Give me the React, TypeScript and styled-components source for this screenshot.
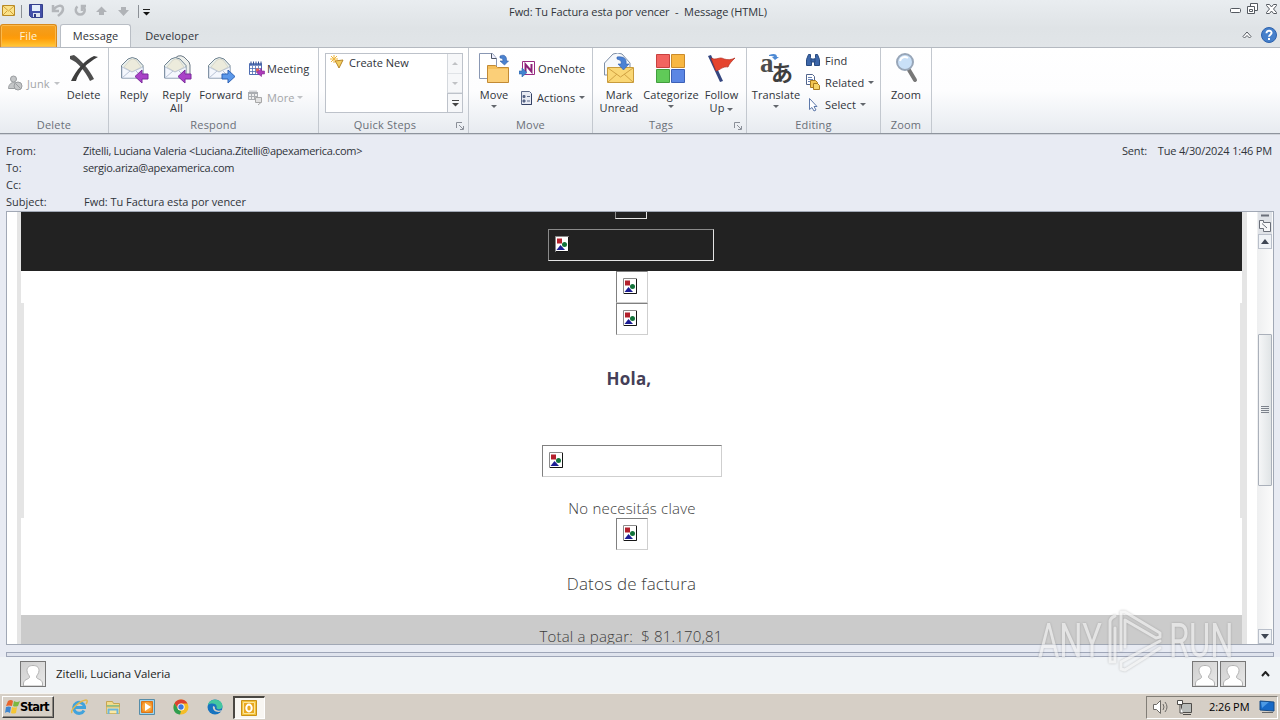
import type { ReactNode } from "react";
import styled, { createGlobalStyle } from "styled-components";

const GlobalStyle = createGlobalStyle`
  * {
    box-sizing: border-box;
  }
  body {
    margin: 0;
    overflow: hidden;
    font-family: "Open Sans", "Noto Sans", sans-serif;
    font-size: 11px;
    color: #30343a;
  }
  svg {
    display: block;
    flex: none;
  }
`;

const Window = styled.div`
  position: relative;
  width: 1280px;
  height: 720px;
  display: flex;
  flex-direction: column;
  background-color: #e8ebf3;
  overflow: hidden;
`;
const Top = styled.div`
  height: 47px;
  background: linear-gradient(#e9edf0, #dfe3e6 60%, #e1e5e8);
`;
const TitleBar = styled.div`
  height: 24px;
  padding-bottom: 2px;
  display: grid;
  grid-template-columns: 400px 1fr 400px;
  align-items: center;
`;
const QuickAccess = styled.div`
  display: flex;
  align-items: center;
  height: 22px;
`;
const Title = styled.div`
  text-align: center;
  padding-right: 4px;
  letter-spacing: -0.08px;
`;
const WindowButtons = styled.div`
  display: flex;
  justify-content: flex-end;
  padding: 0 1px 7px 0;
`;
const TabRow = styled.div`
  height: 23px;
  display: flex;
  align-items: flex-end;
`;
const Tab = styled.div<{ $kind?: "file" | "active"; $width: number }>`
  width: ${(p) => p.$width}px;
  height: 23px;
  line-height: 24px;
  text-align: center;
  letter-spacing: 0.1px;
  border-radius: 3px 3px 0 0;
  ${(p) =>
    p.$kind === "file" &&
    `color: #fff3d6;
    line-height: 21px;
    border: 1px solid #d88a1c;
    border-bottom: 0;
    background: linear-gradient(#f3a021, #f89a10 45%, #ff9c08 60%, #ffcb3c);
    box-shadow: inset 0 0 0 1px #fbb94c;`}
  ${(p) =>
    p.$kind === "active" &&
    `margin: 0 0 -1px 3px;
    height: 24px;
    line-height: 22px;
    border: 1px solid #b9bec5;
    border-bottom: 0;
    background-color: #fff;`}
`;
const TabTools = styled.div`
  margin-left: auto;
  display: flex;
  align-items: center;
  gap: 9px;
  height: 23px;
  padding: 0 3px 2px 0;
`;
const Ribbon = styled.div`
  height: 87px;
  display: flex;
  border-top: 1px solid #b4b9c0;
  border-bottom: 1px solid #8e949d;
  background: linear-gradient(#fff, #fdfdfe 50%, #e7ebf0);
`;
const GroupBox = styled.div<{ $width: number }>`
  position: relative;
  width: ${(p) => p.$width}px;
  height: 85px;
  display: flex;
  flex-direction: column;
  border-right: 1px solid #c3c8cf;
`;
const GroupBody = styled.div`
  flex: 1;
  display: flex;
`;
const GroupLabel = styled.div<{ $launcher?: boolean }>`
  height: 16px;
  padding-right: ${(p) => (p.$launcher ? 17 : 0)}px;
  line-height: 16px;
  text-align: center;
  letter-spacing: 0.2px;
  color: #6a6f78;
`;
const Launcher = styled.svg`
  position: absolute;
  right: 4px;
  bottom: 3px;
`;
const BigButton = styled.div<{ $width: number }>`
  width: ${(p) => p.$width}px;
  padding-top: 5px;
  display: flex;
  flex-direction: column;
  align-items: center;
  text-align: center;
  line-height: 13px;
  white-space: nowrap;
  letter-spacing: 0.1px;
`;
const BigLabel = styled.div`
  padding-top: 3px;
  white-space: pre;
`;
const SmallColumn = styled.div<{ $left?: number; $top: number; $row: number }>`
  padding: ${(p) => p.$top}px 0 0 ${(p) => p.$left ?? 0}px;
  display: grid;
  grid-auto-rows: ${(p) => p.$row}px;
  align-content: start;
`;
const SmallButton = styled.div<{ $muted?: boolean; $gap?: number }>`
  display: flex;
  align-items: center;
  gap: ${(p) => p.$gap ?? 3}px;
  white-space: nowrap;
  letter-spacing: 0.1px;
  color: ${(p) => (p.$muted ? "#a3a5a8" : "inherit")};
`;
const Arrow = styled.i<{ $muted?: boolean; $up?: boolean; $below?: boolean }>`
  display: inline-block;
  width: 0;
  height: 0;
  margin-top: ${(p) => (p.$below ? 4 : 0)}px;
  border: 3px solid transparent;
  border-top-color: ${(p) => (p.$muted ? "#c0c2c5" : "#62666c")};
  border-bottom: 0;
  vertical-align: middle;
  transform: ${(p) => (p.$up ? "rotate(180deg)" : "none")};
`;
const Steps = styled.div`
  width: 138px;
  height: 60px;
  margin: 5px 0 0 6px;
  display: flex;
  border: 1px solid #bdc2ca;
  background-color: #fff;
`;
const StepItem = styled.div`
  flex: 1;
  height: 18px;
  display: flex;
  align-items: center;
  gap: 5px;
  padding: 0 0 1px 4px;
`;
const StepScroll = styled.div`
  width: 15px;
  display: grid;
  grid-template-rows: 20px 19px 1fr;
  border-left: 1px solid #d4d8dd;
  background-color: #f6f7f9;
  div {
    display: flex;
    align-items: center;
    justify-content: center;
    border-bottom: 1px solid #e0e3e7;
  }
  div:last-child {
    border: 1px solid #bdc2ca;
    margin: 0 -1px -1px;
  }
`;
const Headers = styled.div`
  height: 77px;
  padding: 7px 8px 0 6px;
  display: flex;
  justify-content: space-between;
  border-top: 1px solid #d0d4db;
`;
const HeaderGrid = styled.div`
  display: grid;
  grid-template-columns: 77px auto;
  grid-auto-rows: 17px;
  line-height: 17px;
`;
const Address = styled.span`
  letter-spacing: -0.3px;
`;
const Subject = styled.span`
  padding-left: 1px;
  letter-spacing: -0.03px;
`;
const Sent = styled.div`
  display: flex;
  gap: 11px;
  line-height: 17px;
  letter-spacing: -0.18px;
`;
const Frame = styled.div`
  height: 434px;
  width: 1268px;
  margin-left: 6px;
  display: flex;
  border: 1px solid #a1a8b5;
  background-color: #fff;
`;
const Mail = styled.div`
  width: 1230px;
  margin-left: 10px;
  border: solid #e5e5e5;
  border-width: 0 5px 0 4px;
  display: flex;
  flex-direction: column;
  overflow: hidden;
`;
const DarkBand = styled.div`
  height: 59px;
  flex: none;
  padding-right: 2px;
  display: flex;
  flex-direction: column;
  align-items: center;
  background-color: #222;
`;
const MailBlock = styled.div<{ $height: number; $inset?: boolean }>`
  height: ${(p) => p.$height}px;
  flex: none;
  display: flex;
  flex-direction: column;
  align-items: center;
  border: solid #e5e5e5;
  border-width: ${(p) => (p.$inset ? "0 2px 0 3px" : "0")};
`;
const Missing = styled.div<{ $width: number; $top?: number; $onDark?: boolean }>`
  width: ${(p) => p.$width}px;
  height: 32px;
  flex: none;
  margin-top: ${(p) => p.$top ?? 0}px;
  padding: 6px;
  border: 1px solid;
  border-color: ${(p) =>
    p.$onDark ? "#8a8a8a #e4e4e4 #e4e4e4 #8a8a8a" : "#808080 #cfcfcf #cfcfcf #808080"};
`;
const MissingTail = styled.div`
  width: 32px;
  height: 7px;
  flex: none;
  border: solid #e4e4e4;
  border-width: 0 1px 1px;
  border-left-color: #8a8a8a;
`;
const Greeting = styled.div`
  margin: 31px 6px 0 0;
  height: 26px;
  font: 700 17px/26px "Open Sans", sans-serif;
  letter-spacing: 0.2px;
  color: #453f58;
`;
const LightText = styled.div<{ $size: number; $top: number }>`
  margin-top: ${(p) => p.$top}px;
  font-weight: 300;
  font-size: ${(p) => p.$size}px;
  line-height: 20px;
  letter-spacing: 0.2px;
  white-space: pre;
  color: #3c3c3c;
`;
const Total = styled.div`
  flex: 1;
  display: flex;
  justify-content: center;
  margin-right: -1px;
  padding-right: 2px;
  background-color: #cbcbcb;
`;
const ScrollTrack = styled.div`
  width: 16px;
  margin-left: auto;
  padding: 0 1px;
  display: flex;
  flex-direction: column;
  align-items: center;
  background: linear-gradient(90deg, #eeeff0, #fbfbfb);
`;
const ScrollButton = styled.div`
  width: 14px;
  height: 15px;
  display: flex;
  align-items: center;
  justify-content: center;
  border: 1px solid #b9bfca;
  background-color: #eff2f6;
`;
const Split = styled.div`
  width: 14px;
  height: 22px;
  background-color: #dfe2e7;
`;
const Thumb = styled.div`
  width: 14px;
  height: 152px;
  margin: 85px 0 auto;
  padding-bottom: 2px;
  display: flex;
  flex-direction: column;
  align-items: center;
  justify-content: center;
  gap: 1px;
  border: 1px solid #aab0ba;
  border-radius: 1px;
  background: linear-gradient(90deg, #f5f6f7, #e0e4e6);
  i {
    width: 8px;
    height: 1px;
    background-color: #7d838c;
  }
`;
const Splitter = styled.div`
  height: 5px;
  width: 1268px;
  margin: 7px 0 0 6px;
  border: 1px solid #9fa6b8;
  background-color: #dfe3ed;
`;
const People = styled.div`
  height: 36px;
  padding: 0 10px 3px 20px;
  display: flex;
  align-items: center;
  background-color: #f0f3f6;
`;
const Avatar = styled.div`
  width: 26px;
  height: 26px;
  border: 1px solid #777;
  background: linear-gradient(135deg, #cfcfcf, #e8e8e8);
`;
const PersonName = styled.div`
  margin-left: 10px;
  margin-right: auto;
  font-size: 11.5px;
  letter-spacing: -0.05px;
  color: #222;
`;
const Faces = styled.div`
  display: flex;
  gap: 2px;
  margin-right: 15px;
`;
const Taskbar = styled.div`
  height: 27px;
  padding: 1px 2px 1px;
  display: flex;
  align-items: center;
  border-top: 1px solid #f7f5f1;
  background-color: #d6cfc6;
`;
const Start = styled.div`
  width: 52px;
  height: 22px;
  display: flex;
  align-items: center;
  padding-left: 2px;
  font: 700 11.5px "DejaVu Sans", sans-serif;
  letter-spacing: -0.8px;
  color: #000;
  border: 1px solid;
  border-color: #fff #404040 #404040 #fff;
  box-shadow: inset -1px -1px #8b867e;
`;
const Launchers = styled.div`
  display: flex;
  margin-left: 8px;
`;
const TaskIcon = styled.div<{ $active?: boolean }>`
  width: 34px;
  height: 23px;
  display: flex;
  align-items: center;
  justify-content: center;
  ${(p) =>
    p.$active &&
    `width: 32px;
    margin-left: 1px;
    padding-right: 2px;
    background-color: #f8f6f2;
    border: solid;
    border-width: 2px 1px 1px 2px;
    border-color: #4a4742 #fff #fff #4a4742;`}
`;
const Tray = styled.div`
  width: 132px;
  height: 23px;
  margin-left: auto;
  padding-left: 6px;
  display: flex;
  align-items: center;
  border: 1px solid;
  border-color: #827e77 #fff #fff #827e77;
  color: #000;
`;
const Clock = styled.span`
  width: 41px;
  margin: -2px 9px 0 14px;
  white-space: nowrap;
  letter-spacing: -0.1px;
`;
const Watermark = styled.div`
  position: absolute;
  left: 1038px;
  top: 608px;
  width: 194px;
  height: 66px;
  display: flex;
  align-items: center;
  justify-content: space-between;
  filter: drop-shadow(0 0 1px rgba(90, 90, 90, 0.5));
  opacity: 0.66;
`;
const Mark = styled.span`
  width: 63px;
  font: 400 48px/66px Roboto, sans-serif;
  color: #f2f2f2;
  span {
    display: inline-block;
    transform: scaleX(0.68);
    transform-origin: left;
  }
`;

function Group({
  width,
  label,
  launcher,
  children,
}: {
  width: number;
  label: string;
  launcher?: boolean;
  children: ReactNode;
}) {
  return (
    <GroupBox $width={width}>
      <GroupBody>{children}</GroupBody>
      <GroupLabel $launcher={launcher}>{label}</GroupLabel>
      {launcher && (
        <Launcher width="8" height="8" fill="none" stroke="#8a8f98">
          <path d="M.5 6V.5H6M3 3l4 4M7.500 4v3.500H4" />
        </Launcher>
      )}
    </GroupBox>
  );
}

function Envelope({ kind }: { kind: "reply" | "all" | "forward" }) {
  const fwd = kind === "forward";
  const all = kind === "all";
  return (
    <svg width="32" height="32" viewBox="0 0 32 32">
      {all && (
        <path d="M10 8 17 3q3-1 6 1l5 5 1 3v12h-6" fill="#eef0ec" stroke="#6d7a87" />
      )}
      <path d="M3.500 12.500 10 6q4-3 9 0l6 6.500v12.500H3.500z" fill="#e8eeea" stroke="#6f8291" />
      <path d="m6 14 6-7q3-2 6 0l5 7-9 5z" fill="#ecebdc" stroke="#c9cabd" strokeWidth=".6" />
      <path d="M4 14v11h21V14l-11 5z" fill="#f4f7fd" stroke="#a7b4cb" strokeWidth=".7" />
      <path d="m4 25 8-7m13 7-7-7" stroke="#b8c3d6" fill="none" />
      {fwd ? (
        <path d="M17 21h6v-4l7 6.500-7 6.500v-4h-6z" fill="#5b98ea" stroke="#2f62b5" />
      ) : (
        <path d="M30 21h-6v-4l-7 6.500 7 6.500v-4h6z" fill="#aa42c8" stroke="#7b2a9c" />
      )}
    </svg>
  );
}

function CalendarIcon({ muted }: { muted?: boolean }) {
  const ink = muted ? "#aaadb1" : "#4f6eb2";
  return (
    <svg width="17" height="16" viewBox="0 0 17 16">
      {muted ? (
        <>
          <path d="M.5 2.500h9v7h-9z" fill="#eee" stroke={ink} />
          <path d="M0 3h10" stroke={ink} strokeWidth="2" />
          <path d="M2 .5v2m2-2v2m2-2v2m2-2v2M1 6.500h8M3.500 4v5M6.500 4v5" stroke={ink} />
          <path d="M7.500 7.500h6v5h-6zM10 15l3-2.500" fill="#e2e2e2" stroke="#a8a8a8" />
        </>
      ) : (
        <>
          <path d="M1.500 3.500h12v10h-12z" fill="#fff" stroke={ink} />
          <path d="M1 3.500h13" stroke={ink} strokeWidth="2.500" />
          <path d="M3 .5v3m2.500-3v3M8 .5v3m2.500-3v3M13 .5v3" stroke="#334f91" />
          <path d="M2 7.500h11M2 10.500h11M4.500 5v8M7.500 5v8M10.500 5v8" stroke={ink} strokeWidth=".8" />
          <path d="M8 7.500h3v3H8z" fill="#e26157" />
          <path d="M16.500 10h-3V7.500L8.500 11.500l5 4V13h3z" fill="#ad3ab8" stroke="#872895" strokeWidth=".6" />
        </>
      )}
    </svg>
  );
}

function MissingIcon() {
  return (
    <svg width="14" height="16" viewBox="0 0 14 16">
      <path d="M.5.5h13v15H.5z" fill="#fff" stroke="#8a8a8a" />
      <path d="M13.500 1v14.500H1" fill="none" stroke="#151515" />
      <path d="M2 2.500h5v5H2z" fill="#b3202c" />
      <circle cx="9.500" cy="8.500" r="2.500" fill="#13733a" />
      <path d="m1.500 14 4-5 4.500 5z" fill="#1c1d94" />
    </svg>
  );
}

function Face() {
  return (
    <Avatar>
      <svg width="24" height="24" viewBox="0 0 24 24">
        <path
          d="M8.500 15c0-2-2.500-3-2.500-6.500C6 5 8.500 3.500 12 3.500S18 5 18 8.500c0 3.500-2.500 4.500-2.500 6.500 0 2.500 5 1.500 6 6v3h-19v-3c1-4.500 6-3.500 6-6z"
          fill="#fff"
          stroke="#b2b2b2"
        />
      </svg>
    </Avatar>
  );
}

function App() {
  return (
    <Window>
      <GlobalStyle />
      <Top>
        <TitleBar>
          <QuickAccess>
            <svg width="152" height="22" viewBox="0 0 152 22">
              <path d="M2.500 5.500h12v10h-12z" fill="#fbe28a" stroke="#b98a26" />
              <path d="m3 6 5.500 5L14 6M3 15l4-4m7 4-4-4" fill="none" stroke="#d0a13b" />
              <path d="M21.500 5v13" stroke="#8b9096" />
              <path d="M29.500 4.500h13v13h-11l-2-2z" fill="#4450a8" stroke="#35408c" />
              <path d="M32 5h8v6h-8z" fill="#e6effb" />
              <path d="M33 13h7v4h-7z" fill="#dfe4ef" />
              <path d="M34 14h2v3h-2z" fill="#313b83" />
              <path d="M53 5v6h6M53 11c3-6 10-7 10-2 0 4-3 5-5 7" fill="none" stroke="#b3b6ba" strokeWidth="2.500" />
              <path d="M83 6.500a4.500 4.500 0 1 1-5.500 0M82 11V6h4" fill="none" stroke="#b3b6ba" strokeWidth="2.500" />
              <path d="m96 12 5.500-5.500 5.500 5.500h-3v3h-5v-3z" fill="#b0b3b7" />
              <path d="m118 10 5.500 6 5.500-6h-3V7h-5v3z" fill="#b0b3b7" />
              <path d="M138.500 5v13" stroke="#8b9096" />
              <path d="M143 9.500h7" stroke="#222" />
              <path d="M143 12h7l-3.500 3.500z" fill="#111" />
            </svg>
          </QuickAccess>
          <Title>Fwd: Tu Factura esta por vencer&nbsp; -&nbsp; Message (HTML)</Title>
          <WindowButtons>
            <svg width="50" height="14" viewBox="0 0 50 14" fill="#fff" stroke="#555a61">
              <rect x="1.500" y="7.500" width="10" height="4" rx="1" />
              <path d="M21.500 2.500h7v7h-7z" />
              <path d="M18.500 5.500h7v7h-7z" />
              <path d="M20.500 8.500h3v2h-3z" />
              <path d="M37.500 3.500h3l2 2.500 2-2.500h3v1l-3 3.500 3 3.500v1h-3l-2-2.500-2 2.500h-3v-1l3-3.500-3-3.500z" />
            </svg>
          </WindowButtons>
        </TitleBar>
        <TabRow>
          <Tab $kind="file" $width={57}>File</Tab>
          <Tab $kind="active" $width={71}>Message</Tab>
          <Tab $width={82}>Developer</Tab>
          <TabTools>
            <svg width="10" height="8" fill="none" stroke="#555a61">
              <path d="M1 5.500 5 1l4 4.500L7.500 7 5 4.500 2.500 7z" fill="#fff" />
            </svg>
            <svg width="16" height="16">
              <circle cx="8" cy="8" r="7.500" fill="#4680cb" stroke="#2d62ad" />
              <path d="M5.500 6.200C5.500 2.700 11 3 10.500 6.200 10.300 7.700 8 7.800 8 9.800M8 11v2" fill="none" stroke="#fff" strokeWidth="2" />
            </svg>
          </TabTools>
        </TabRow>
      </Top>

      <Ribbon>
        <Group width={109} label="Delete">
          <SmallColumn $left={7} $top={24} $row={22}>
            <SmallButton $muted $gap={4}>
              <svg width="16" height="16" fill="#c4c6c8" stroke="#999c9f">
                <circle cx="6.500" cy="4" r="3" />
                <path d="M1.500 13.500c0-3 2-6 5-6s4 2 4 6z" />
                <circle cx="11" cy="11" r="4" />
                <path d="m8.500 8.500 5 5" />
              </svg>
              Junk <Arrow $muted />
            </SmallButton>
          </SmallColumn>
          <BigButton $width={48}>
            <svg width="32" height="32" viewBox="0 0 32 32">
              <path d="M2 3 6 2c7 5 15 14 20 24l-4 2C17 18 10 9 2 6z" fill="#4e4e4e" />
              <path d="M30 4C19 10 11 18 8 28l-5 0C8 17 17 7 26 3z" fill="#3d3d3d" />
            </svg>
            <BigLabel>Delete</BigLabel>
          </BigButton>
        </Group>
        <Group width={210} label="Respond">
          <BigButton $width={50}>
            <Envelope kind="reply" />
            <BigLabel>Reply</BigLabel>
          </BigButton>
          <BigButton $width={35}>
            <Envelope kind="all" />
            <BigLabel>{"Reply\nAll"}</BigLabel>
          </BigButton>
          <BigButton $width={54}>
            <Envelope kind="forward" />
            <BigLabel>Forward</BigLabel>
          </BigButton>
          <SmallColumn $top={6} $row={29}>
            <SmallButton $gap={2}>
              <CalendarIcon />
              Meeting
            </SmallButton>
            <SmallButton $muted $gap={2}>
              <CalendarIcon muted />
              More <Arrow $muted />
            </SmallButton>
          </SmallColumn>
        </Group>
        <Group width={150} label="Quick Steps" launcher>
          <Steps>
            <StepItem>
              <svg width="14" height="15">
                <path d="m5 6 8-1-4 8-2-4z" fill="#f4cf62" stroke="#b78528" />
                <path d="M4 0v8M0 4h8M1 1l6 6M7 1 1 7" stroke="#eeb53a" />
              </svg>
              Create New
            </StepItem>
            <StepScroll>
              <div>
                <Arrow $muted $up />
              </div>
              <div>
                <Arrow $muted />
              </div>
              <div>
                <svg width="7" height="7">
                  <path d="M0 .5h7" stroke="#444" />
                  <path d="M0 3h7L3.500 6.500z" fill="#444" />
                </svg>
              </div>
            </StepScroll>
          </Steps>
        </Group>
        <Group width={124} label="Move">
          <BigButton $width={50}>
            <svg width="32" height="32" viewBox="0 0 32 32">
              <path d="M1.500.5h13l4 5v20h-17z" fill="#fff" stroke="#8997b3" />
              <path d="M13.500.5v5h5" fill="#eef" stroke="#4d5566" />
              <path d="M9.500 12.500h8l2 2h11v15h-21z" fill="#f5bf5a" stroke="#c28a34" />
              <path d="M10 16h20v13H10z" fill="#fbcf78" />
              <path d="M22 3c4-2 7 0 6.500 5h2L26.500 12 22 8h3C25 6 24 5 22 5z" fill="#4b82cf" stroke="#2f5da6" strokeWidth=".6" />
            </svg>
            <BigLabel>Move</BigLabel>
            <Arrow $below />
          </BigButton>
          <SmallColumn $top={6} $row={29}>
            <SmallButton $gap={3}>
              <svg width="16" height="16">
                <path d="M3.500.500h12v13h-12z" fill="#fff" stroke="#9a2b82" />
                <path d="M6.500 11V3.500l6 7V3" fill="none" stroke="#8d2179" strokeWidth="2" />
                <path d="M0 10h3V7l5 4.500L3 16v-3H0z" fill="#4384d0" stroke="#2d64a9" strokeWidth=".6" />
              </svg>
              OneNote
            </SmallButton>
            <SmallButton $gap={4}>
              <svg width="14" height="16">
                <path d="M2.500 1.500h8l2 2v11h-10z" fill="#e7eaf3" stroke="#5b6889" />
                <path d="M12.500 4v10.500H3" fill="none" stroke="#334164" />
                <path d="M4 5.500h2v2H4zM4 10h2v2H4zM8 6.500h3M8 11h3" fill="#4b587a" stroke="#5c6a8b" />
              </svg>
              Actions <Arrow />
            </SmallButton>
          </SmallColumn>
        </Group>
        <Group width={154} label="Tags" launcher>
          <BigButton $width={52}>
            <svg width="32" height="32" viewBox="0 0 32 32">
              <path d="M1.500 10 10 1q5-2 9 0l8 9v12h-25.500z" fill="#f6f8fb" stroke="#7e8fa7" />
              <path d="M4.500 14.500h26v15h-26z" fill="#fad775" stroke="#c89b3c" />
              <path d="m5 15 12.500 9L30 15M5 29l9-8m16 8-9-8" fill="none" stroke="#d2a344" />
              <path d="M14 4c7-1 10 2 9 7h3l-5.500 6-5.500-6h3c1-3-1-4-4-5z" fill="#4b82d4" stroke="#2d5dab" strokeWidth=".6" />
            </svg>
            <BigLabel>{"Mark\nUnread"}</BigLabel>
          </BigButton>
          <BigButton $width={52}>
            <svg width="32" height="32" viewBox="0 0 32 32">
              <path d="M1.500 1.500h13v13h-13z" fill="#f26460" stroke="#c8413f" />
              <path d="M16.500 1.500h13v13h-13z" fill="#f8b742" stroke="#cb8b2a" />
              <path d="M1.500 16.500h13v13h-13z" fill="#60ca58" stroke="#429d3e" />
              <path d="M16.500 16.500h13v13h-13z" fill="#5b86e4" stroke="#3c60b7" />
            </svg>
            <BigLabel>Categorize</BigLabel>
            <Arrow $below />
          </BigButton>
          <BigButton $width={49}>
            <svg width="32" height="32" viewBox="0 0 32 32">
              <path d="m2 3 3-1 12 26-3 1z" fill="#344680" />
              <path d="M5 5c6 3 8-2 13 1 4 1 7 1 11-1-3 3-6 6-7 9-5-1-8 3-12 4z" fill="#e5442e" stroke="#b02d20" strokeWidth=".7" />
            </svg>
            <BigLabel>
              {"Follow\nUp "}
              <Arrow />
            </BigLabel>
          </BigButton>
        </Group>
        <Group width={134} label="Editing">
          <BigButton $width={58}>
            <svg width="32" height="32" viewBox="0 0 32 32" overflow="visible">
              <text x="0" y="19" fontFamily="Liberation Serif, serif" fontSize="27" fontWeight="700" fill="#4d4d4d">a</text>
              <text x="11" y="28" fontFamily="Noto Sans CJK JP, sans-serif" fontSize="22" fontWeight="700" fill="#3f3f3f">あ</text>
              <path d="M9 2c5-2 8-1 8 2h2l-4 3-3-3h2c0-1-2-1-5-1z" fill="#4e8ad4" />
            </svg>
            <BigLabel>Translate</BigLabel>
            <Arrow $below />
          </BigButton>
          <SmallColumn $top={1} $row={22}>
            <SmallButton $gap={4}>
              <svg width="16" height="15" fill="#3c66a9" stroke="#284a80">
                <path d="M3.500 1.500h2v3l1 2v6h-5v-6zM10.500 1.500h2l2 5v6h-5v-6l1-2z" />
                <path d="M6 6h4v3H6z" />
              </svg>
              Find
            </SmallButton>
            <SmallButton $gap={4}>
              <svg width="16" height="16">
                <path d="M1.500.5h6l2 2v8h-8z" fill="#fff" stroke="#52658c" />
                <path d="M3 3.500h4M3 5.500h5M3 7.500h4" stroke="#6680b3" />
                <path d="M5.500 6.500h5l2 2v5h-7z" fill="#f3c550" stroke="#a87b20" />
                <path d="M8.500 9.500h4l2 2v4h-6z" fill="#f7d568" stroke="#a87b20" />
              </svg>
              Related <Arrow />
            </SmallButton>
            <SmallButton $gap={4}>
              <svg width="16" height="15">
                <path d="M4.500 1.500v11l2.500-2 2 3.500 2-1-2-3.500h3z" fill="#fff" stroke="#5e79aa" />
              </svg>
              Select <Arrow />
            </SmallButton>
          </SmallColumn>
        </Group>
        <Group width={51} label="Zoom">
          <BigButton $width={50}>
            <svg width="32" height="32" viewBox="0 0 32 32">
              <path d="m19 17 6 10" stroke="#777" strokeWidth="4" strokeLinecap="round" />
              <circle cx="15" cy="9" r="8" fill="#c9e0f8" stroke="#98a6b8" strokeWidth="2" />
              <path d="M10 8c1-4 5-5 8-3" fill="none" stroke="#fff" strokeWidth="2" />
            </svg>
            <BigLabel>Zoom</BigLabel>
          </BigButton>
        </Group>
      </Ribbon>

      <Headers>
        <HeaderGrid>
          <span>From:</span>
          <Address>Zitelli, Luciana Valeria &lt;Luciana.Zitelli@apexamerica.com&gt;</Address>
          <span>To:</span>
          <Address>sergio.ariza@apexamerica.com</Address>
          <span>Cc:</span>
          <span />
          <span>Subject:</span>
          <Subject>Fwd: Tu Factura esta por vencer</Subject>
        </HeaderGrid>
        <Sent>
          <span>Sent:</span>
          <span>Tue 4/30/2024 1:46 PM</span>
        </Sent>
      </Headers>

      <Frame>
        <Mail>
          <DarkBand>
            <MissingTail />
            <Missing $width={166} $top={10} $onDark>
              <MissingIcon />
            </Missing>
          </DarkBand>
          <MailBlock $height={32}>
            <Missing $width={32}>
              <MissingIcon />
            </Missing>
          </MailBlock>
          <MailBlock $height={215} $inset>
            <Missing $width={32}>
              <MissingIcon />
            </Missing>
            <Greeting>Hola,</Greeting>
            <Missing $width={180} $top={53}>
              <MissingIcon />
            </Missing>
            <LightText $size={15} $top={21}>No necesitás clave</LightText>
          </MailBlock>
          <MailBlock $height={97}>
            <Missing $width={32}>
              <MissingIcon />
            </Missing>
            <LightText $size={17} $top={24}>Datos de factura</LightText>
          </MailBlock>
          <Total>
            <LightText $size={15} $top={11}>{"Total a pagar:  $ 81.170,81"}</LightText>
          </Total>
        </Mail>
        <ScrollTrack>
          <Split>
            <svg width="14" height="22" fill="#f7f8fa" stroke="#6a6f79">
              <path d="M3 3.500h8" strokeWidth="2" />
              <path d="M1.500 8.500h4v2h7v9h-7v-3h-4z" />
              <path d="M4 11.500 9 16" />
            </svg>
          </Split>
          <ScrollButton>
            <svg width="8" height="5">
              <path d="m0 5 4-5 4 5z" fill="#3f4654" />
            </svg>
          </ScrollButton>
          <Thumb>
            <i />
            <i />
            <i />
            <i />
          </Thumb>
          <ScrollButton>
            <svg width="8" height="5">
              <path d="m0 0 4 5 4-5z" fill="#3f4654" />
            </svg>
          </ScrollButton>
        </ScrollTrack>
      </Frame>
      <Splitter />

      <People>
        <Face />
        <PersonName>Zitelli, Luciana Valeria</PersonName>
        <Faces>
          <Face />
          <Face />
        </Faces>
        <svg width="9" height="6">
          <path d="m1 5 3.500-4L8 5" fill="none" stroke="#222" strokeWidth="2" />
        </svg>
      </People>

      <Taskbar>
        <Start>
          <svg width="15" height="16">
            <path d="M3 2q3-2 5 0L7 7Q4 6 1 7z" fill="#e8652c" />
            <path d="M9 2q3 2 6 0l-2 5q-3 1-5 0z" fill="#7cb740" />
            <path d="M1 8q3-1 5 0l-1 6q-3-2-5 0z" fill="#3e86d0" />
            <path d="M7 8q3 1 5 0l-1 6q-3 1-5 0z" fill="#f5c634" />
          </svg>
          Start
        </Start>
        <Launchers>
          <TaskIcon>
            <svg width="18" height="18" fill="none">
              <path d="M14 12.500a5.500 5.500 0 1 1 .5-4v1H5" stroke="#41a3dc" strokeWidth="3" />
              <path d="M2 15C0 12 9 3 16 2c2 0 1 3 0 4" stroke="#e2b84e" strokeWidth="1.500" />
            </svg>
          </TaskIcon>
          <TaskIcon>
            <svg width="16" height="16">
              <path d="M1.500 2.500h6l1 2h6v10h-13z" fill="#f3dc8b" stroke="#c5a552" />
              <path d="M2 6h12v2H2z" fill="#8cc08a" />
              <path d="M1.500 14.500V8h13v6.500z" fill="#fae9a6" stroke="#d1b767" />
              <path d="M3.500 15v-4.500h9V15" fill="none" stroke="#6db5da" strokeWidth="2" />
            </svg>
          </TaskIcon>
          <TaskIcon>
            <svg width="16" height="16">
              <path d="M.5.500h15v15H.5z" fill="#9ed4ee" stroke="#568da9" />
              <path d="M2.500 2.500h11v11h-11z" fill="#f18a1e" stroke="#d9751a" />
              <circle cx="8" cy="8" r="5" fill="#f9a63c" />
              <path d="m6 4 6 4-6 4z" fill="#fff" />
            </svg>
          </TaskIcon>
          <TaskIcon>
            <svg width="16" height="16" viewBox="0 0 16 16">
              <circle cx="8" cy="8" r="7.500" fill="#f5bd27" />
              <path d="M1.500 4.200A7.500 7.500 0 0 1 14.500 4.500H8L5 10z" fill="#dc4131" />
              <path d="M1.500 4.200 5.500 11 8 12l-1 3.500C1 15-1 9 1.500 4.200z" fill="#2f9e4f" />
              <circle cx="8" cy="8" r="3.600" fill="#fff" />
              <circle cx="8" cy="8" r="2.700" fill="#3c78df" />
            </svg>
          </TaskIcon>
          <TaskIcon>
            <svg width="16" height="16" viewBox="0 0 16 16">
              <circle cx="8" cy="8" r="7.500" fill="#1773bf" />
              <path d="M1 6C2-1 15-1 15.500 7c0 4-5 4-6 2C11 5 5 3 1 6z" fill="#44c6a0" />
              <path d="M8 8c-1 2 2 5 7 3l-1 1.500C9 14 5 11 6 7z" fill="#d6cfc6" />
            </svg>
          </TaskIcon>
          <TaskIcon $active>
            <svg width="16" height="16">
              <path d="M.5.500h15v15H.5z" fill="#f4c33a" stroke="#c99117" />
              <path d="M2.500 2.500h11v11h-11z" fill="#e9a820" stroke="#fbe49b" />
              <ellipse cx="8" cy="8" rx="2.700" ry="3.500" fill="none" stroke="#fff" strokeWidth="2" />
            </svg>
          </TaskIcon>
        </Launchers>
        <Tray>
          <svg width="42" height="16" fill="none" stroke="#6d6a66">
            <path d="M.5 5.500h3l4-4v13l-4-4h-3z" fill="#fff" />
            <path d="M10 5q2 3 0 6M12 3q4 5 0 10" />
            <path d="M28.500 4.500h10v9h-10z" fill="#b9bcba" stroke="#4f4d4a" />
            <path d="M30 15.500h8M24.500 1.500h5v4h-5zM27 6v8h3" fill="#fff" stroke="#4f4d4a" />
          </svg>
          <Clock>2:26 PM</Clock>
          <svg width="16" height="14">
            <path d="m1 1 14 1v9L1 10z" fill="#1769c7" stroke="#194d87" />
            <path d="m2 2 8 0-7 6z" fill="#4d9ae5" />
            <path d="M3 12.500h11" stroke="#666" />
          </svg>
        </Tray>
      </Taskbar>

      <Watermark>
        <Mark>
          <span>ANY</span>
        </Mark>
        <svg
          width="58"
          height="66"
          viewBox="0 0 58 66"
          fill="none"
          stroke="#f2f2f2"
          strokeWidth="3"
          strokeLinejoin="round"
          strokeLinecap="round"
        >
          <path d="M4 54V14q0-4 5-6M9 20v34H4" />
          <path d="M15 42V4l4 0 35 21v4l-4 1L19 12v27" />
          <path d="M54 33 15 54v7l4 1 35-22" />
        </svg>
        <Mark>
          <span>RUN</span>
        </Mark>
      </Watermark>
    </Window>
  );
}

export default App;
